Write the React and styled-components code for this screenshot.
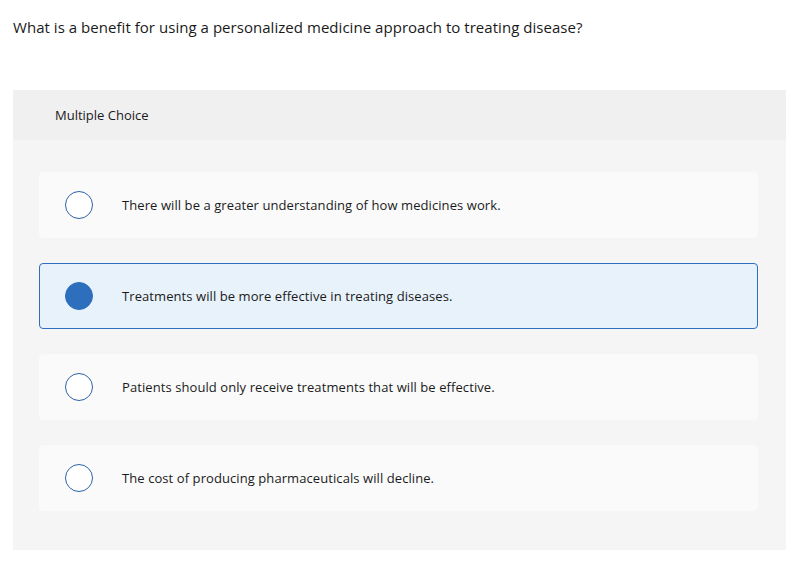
import React, { useState } from "react";
import styled, { createGlobalStyle } from "styled-components";

const color = {
  text: "#1a1a1a",
  header: "#f0f0f0",
  panel: "#f5f5f5",
  option: "#fafafa",
  selectedBg: "#e8f2fb",
  blue: "#2e6fbd",
  ring: "#2b63a6",
};

const GlobalStyle = createGlobalStyle`
  body {
    margin: 0;
    background: #fff;
    font-family: "Open Sans", Lato, sans-serif;
    color: ${color.text};
  }
`;

const choices = [
  "There will be a greater understanding of how medicines work.",
  "Treatments will be more effective in treating diseases.",
  "Patients should only receive treatments that will be effective.",
  "The cost of producing pharmaceuticals will decline.",
];

const App = () => {
  const [selected, setSelected] = useState(1);

  return (
    <Page>
      <GlobalStyle />
      <Question>
        What is a benefit for using a personalized medicine approach to
        treating disease?
      </Question>
      <Panel>
        <Header>Multiple Choice</Header>
        <Body>
          {choices.map((text, i) => (
            <Option
              key={text}
              selected={selected === i}
              onClick={() => setSelected(i)}
            >
              <Radio selected={selected === i} />
              <Label>{text}</Label>
            </Option>
          ))}
        </Body>
      </Panel>
    </Page>
  );
};

export default App;

const Page = styled.div`
  padding: 18px 18px 11px 13px;
`;

const Question = styled.p`
  margin: 0 0 54px;
  font-size: 15px;
  line-height: 18px;
  letter-spacing: 0.04px;
`;

const Panel = styled.div`
  background-color: ${color.panel};
`;

const Header = styled.div`
  height: 50px;
  display: flex;
  align-items: center;
  padding-left: 42px;
  background-color: ${color.header};
  font-size: 13px;
`;

const Body = styled.div`
  display: flex;
  flex-direction: column;
  gap: 25px;
  padding: 32px 28px 39px 26px;
`;

const Option = styled.div`
  height: 66px;
  box-sizing: border-box;
  display: flex;
  align-items: center;
  padding-left: 25px;
  border-radius: 4px;
  cursor: pointer;
  background-color: ${({ selected }) =>
    selected ? color.selectedBg : color.option};
  border: 1px solid ${({ selected }) => (selected ? color.blue : color.option)};
`;

const Radio = styled.span`
  width: 28px;
  height: 28px;
  box-sizing: border-box;
  border-radius: 50%;
  flex-shrink: 0;
  border: 1.5px solid ${({ selected }) => (selected ? color.blue : color.ring)};
  background-color: ${({ selected }) => (selected ? color.blue : "#fff")};
`;

const Label = styled.span`
  margin-left: 29px;
  font-size: 13px;
  letter-spacing: 0.08px;
`;
